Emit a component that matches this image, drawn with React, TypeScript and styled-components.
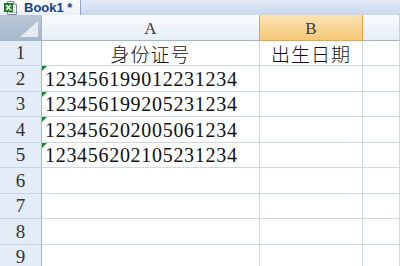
import React from "react";
import styled, { createGlobalStyle, css } from "styled-components";

const Global = createGlobalStyle`
  html, body { margin: 0; padding: 0; background: #ffffff; overflow: hidden; }
  #root { width: 400px; height: 266px; overflow: hidden; }
`;

const Page = styled.div`
  width: 400px;
  height: 266px;
  display: flex;
  flex-direction: column;
  background: #ffffff;
`;

const TabBar = styled.div`
  height: 16px;
  display: flex;
  align-items: stretch;
  background: linear-gradient(#e3ebf6, #c8d8ee);
`;

const Tab = styled.div`
  width: 81px;
  box-sizing: border-box;
  display: flex;
  align-items: center;
  gap: 7px;
  padding-left: 4px;
  background: linear-gradient(#ffffff, #e9eff8);
  border-right: 1px solid #8fa7c8;
  font-family: "Liberation Sans", Arial, sans-serif;
  font-weight: bold;
  font-size: 13px;
  color: #15428b;
  white-space: nowrap;
`;

const TabRule = styled.div`
  height: 2px;
  background: #3c619e;
`;

const TabGap = styled.div`
  height: 3px;
  background: #e2e9f3;
`;

const Sheet = styled.div`
  display: grid;
  grid-template-columns: 42px 218px 103px 1fr;
  grid-template-rows: 26px 25px 26px 25px 26px 25px 26px 25px 26px 25px;
`;

const Corner = styled.div`
  position: relative;
  box-sizing: border-box;
  background: linear-gradient(#b9c6d8, #a9b8cc);
  border-right: 1px solid #9eb6ce;
  border-bottom: 1px solid #9eb6ce;
  &::after {
    content: "";
    position: absolute;
    right: 3px;
    bottom: 3px;
    width: 18px;
    height: 16px;
    background: #e6ecf4;
    clip-path: polygon(100% 0, 100% 100%, 0 100%);
  }
`;

const ColHead = styled.div<{ $active?: boolean }>`
  box-sizing: border-box;
  display: flex;
  align-items: center;
  justify-content: center;
  font-family: "Liberation Serif", "Times New Roman", serif;
  font-size: 17px;
  color: #3a3a3a;
  padding-top: 2px;
  background: linear-gradient(#f9fbfd, #e6edf6);
  border-right: 1px solid #c5d2e2;
  border-bottom: 1px solid #9eb6ce;
  ${(p) =>
    p.$active &&
    css`
      background: linear-gradient(#fbe3b4, #f6c877);
      border-right: 1px solid #f2a23c;
      border-left: 1px solid #f2a23c;
      border-bottom: 1px solid #f2a23c;
      margin-left: -1px;
    `}
`;

const RowHead = styled.div`
  box-sizing: border-box;
  display: flex;
  align-items: center;
  justify-content: center;
  font-family: "Liberation Serif", "Times New Roman", serif;
  font-size: 19px;
  color: #333333;
  background: #e4ecf7;
  border-right: 1px solid #9eb6ce;
  border-bottom: 1px solid #c5d3e4;
`;

const Cell = styled.div<{ $center?: boolean; $flag?: boolean }>`
  position: relative;
  box-sizing: border-box;
  display: flex;
  align-items: center;
  justify-content: ${(p) => (p.$center ? "center" : "flex-start")};
  padding-left: ${(p) => (p.$center ? "0" : "3px")};
  padding-top: 1px;
  border-right: 1px solid #d0d7e5;
  border-bottom: 1px solid #d0d7e5;
  font-family: "Liberation Serif", "Times New Roman", "Noto Sans CJK SC", serif;
  font-size: 20px;
  letter-spacing: 0.7px;
  color: #111111;
  white-space: nowrap;
  overflow: hidden;
  ${(p) =>
    p.$flag &&
    css`
      &::before {
        content: "";
        position: absolute;
        left: 0;
        top: 0;
        width: 5px;
        height: 5px;
        background: #1b8a2e;
        clip-path: polygon(0 0, 100% 0, 0 100%);
      }
    `}
`;

const Han = styled.span`
  font-family: "Noto Sans CJK SC", sans-serif;
  font-size: 19px;
  font-weight: 300;
  letter-spacing: 1px;
  color: #111111;
`;

const ExcelIcon = () => (
  <svg width="13" height="14" viewBox="0 0 13 14">
    <path d="M3.5 0.5h6l3 3v10h-9z" fill="#ffffff" stroke="#7d8ea6" />
    <path d="M9.5 0.5v3h3" fill="#e8eef6" stroke="#7d8ea6" />
    <rect x="0.5" y="2.5" width="8" height="8" fill="#2e8b3a" stroke="#1f6b2a" />
    <path d="M2.3 4.2l4.4 4.6M6.7 4.2l-4.4 4.6" stroke="#ffffff" strokeWidth="1.4" />
    <path d="M5 11.5h6M5 9h6M10 6.5h1" stroke="#9cc59f" />
  </svg>
);

type Row = { a?: string; b?: string; head?: boolean };

const rows: Row[] = [
  { a: "身份证号", b: "出生日期", head: true },
  { a: "123456199012231234" },
  { a: "123456199205231234" },
  { a: "123456202005061234" },
  { a: "123456202105231234" },
  {},
  {},
  {},
  {},
];

export default function App() {
  return (
    <Page>
      <Global />
      <TabBar>
        <Tab>
          <ExcelIcon />
          <span>Book1 *</span>
        </Tab>
      </TabBar>
      <TabRule />
      <TabGap />
      <Sheet>
        <Corner />
        <ColHead>A</ColHead>
        <ColHead $active>B</ColHead>
        <ColHead />
        {rows.map((r, i) => (
          <React.Fragment key={i}>
            <RowHead>{i + 1}</RowHead>
            <Cell $center={r.head} $flag={!r.head && !!r.a}>
              {r.head ? <Han>{r.a}</Han> : r.a}
            </Cell>
            <Cell $center>{r.b ? <Han>{r.b}</Han> : null}</Cell>
            <Cell />
          </React.Fragment>
        ))}
      </Sheet>
    </Page>
  );
}
